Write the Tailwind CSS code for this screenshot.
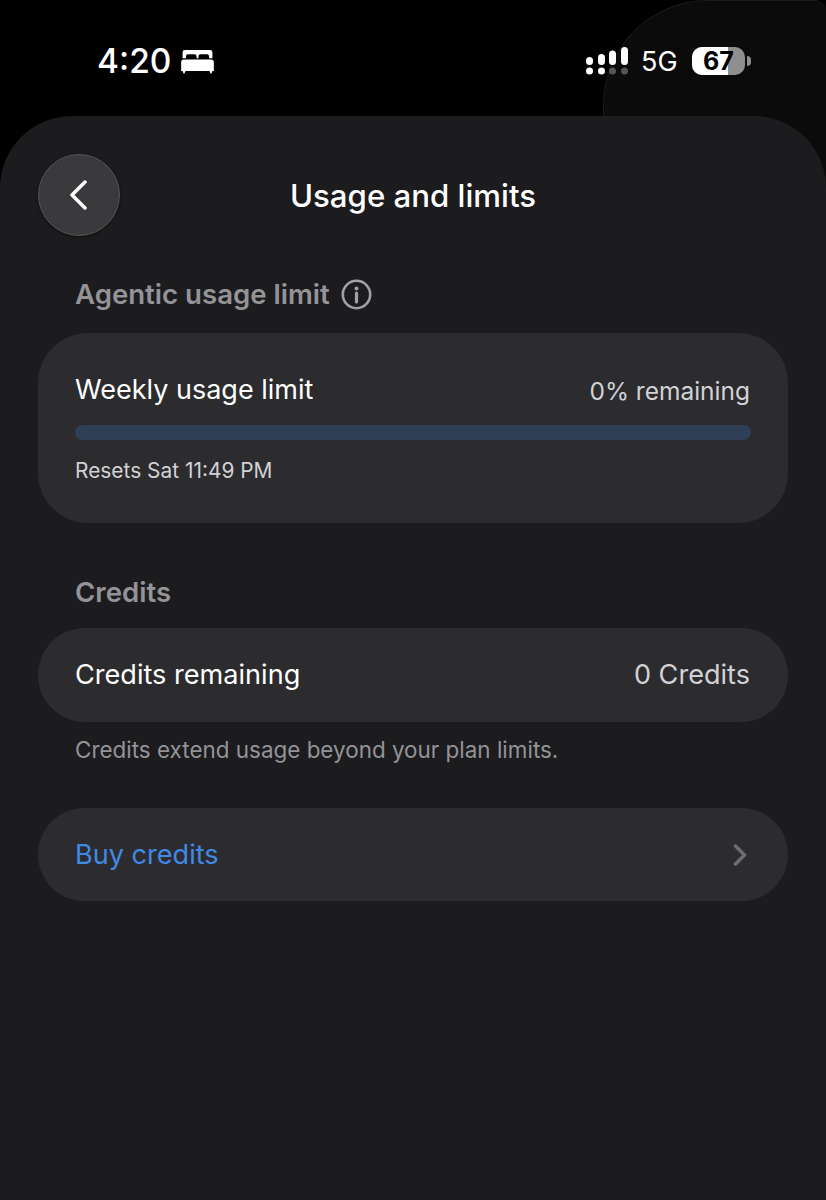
<!DOCTYPE html>
<html lang="en">
<head>
    <meta charset="UTF-8">
    <meta name="viewport" content="width=device-width, initial-scale=1.0">
    <title>Usage and limits</title>
    <script src="https://cdn.jsdelivr.net/npm/@tailwindcss/browser@4"></script>
</head>
<body class="bg-black">
    <div class="relative w-[826px] h-[1200px] overflow-hidden bg-black font-['Inter','Liberation_Sans',sans-serif]">
        <!-- window behind the sheet, top right -->
        <div class="absolute left-[603px] top-0 w-[223px] h-[200px] bg-[#0b0b0c] border-l border-t border-[#1a1a1c] rounded-tl-[105px] rounded-tr-[12px]"></div>

        <!-- status bar -->
        <div class="relative h-[116px] flex items-start justify-between pl-[97px] pr-[75px] pt-[42px]">
            <div class="flex items-center gap-[9px] h-[38px]">
                <span class="text-white text-[33.500px] leading-[38px] font-medium">4:20</span>
                <svg width="35" height="25" viewBox="0 0 36 26" fill="#fff" class="mt-[1px]">
                    <path d="M5 1h26a2.500 2.500 0 0 1 2.500 2.500V9.500H30V7.500a2 2 0 0 0-2-2h-7a2 2 0 0 0-2 2v2h-2v-2a2 2 0 0 0-2-2H8a2 2 0 0 0-2 2v2H2.500v-6A2.500 2.500 0 0 1 5 1z"/>
                    <path d="M4 11h28a3 3 0 0 1 3 3v9h-1.500l-1 2.500h-1L30.500 23h-25l-1 2.500h-1L2.500 23H1v-9a3 3 0 0 1 3-3z"/>
                </svg>
            </div>
            <div class="flex items-center h-[38px]">
                <svg width="42" height="28" viewBox="0 0 42 28" fill="#fff" class="mr-[14px]">
                    <rect x="0" y="10" width="7" height="8" rx="3.500"/>
                    <rect x="12" y="7" width="7" height="11" rx="3.500"/>
                    <rect x="23" y="3.500" width="7" height="14.500" rx="3.500"/>
                    <rect x="35" y="0" width="7" height="18" rx="3.500"/>
                    <circle cx="3.500" cy="24" r="3.500"/>
                    <circle cx="15.500" cy="24" r="3.500"/>
                    <circle cx="26.500" cy="24" r="3.500" fill="#555"/>
                    <circle cx="38.500" cy="24" r="3.500" fill="#555"/>
                </svg>
                <span class="text-white text-[27px] leading-[38px] w-[50px] ml-[-1px] mr-[1px] mt-[1px]">5G</span>
                <div class="relative w-[53px] h-[28px] rounded-[10px] bg-[#8f8f8f] overflow-hidden">
                    <div class="absolute left-0 top-0 bottom-0 w-[36px] bg-white"></div>
                    <span class="absolute inset-0 text-center text-black text-[25px] leading-[28px] font-bold">67</span>
                </div>
                <div class="w-[4px] h-[10px] rounded-r-full bg-[#8f8f8f] ml-[2px]"></div>
            </div>
        </div>

        <!-- sheet -->
        <div class="relative h-[1084px] bg-[#1c1c1e] rounded-t-[72px] px-[38px] pt-[38px]">
            <div class="relative flex items-center justify-center h-[82px]">
                <button class="absolute left-0 top-0 w-[82px] h-[82px] rounded-full bg-[#3a3a3c] border border-[#555557] shadow-[0_1px_3px_rgba(0,0,0,0.5)] flex items-center justify-center">
                    <svg width="20" height="30" viewBox="0 0 20 30" fill="none" stroke="#fff" stroke-width="3.500" stroke-linecap="round" stroke-linejoin="round"><path d="M16 2 3 15l13 13"/></svg>
                </button>
                <h1 class="text-white text-[31.200px] leading-[38px] font-medium mt-[1px]">Usage and limits</h1>
            </div>

            <div class="flex items-center gap-[11px] mt-[40px] pl-[37px] h-[36px]">
                <h2 class="text-[#939398] text-[27.600px] leading-[36px] font-semibold">Agentic usage limit</h2>
                <svg width="31" height="31" viewBox="0 0 31 31" fill="none">
                    <circle cx="15.500" cy="15.500" r="13.700" stroke="#a1a1a5" stroke-width="2.600"/>
                    <circle cx="15.500" cy="9.500" r="2" fill="#a1a1a5"/>
                    <path d="M15.500 14v9" stroke="#a1a1a5" stroke-width="3.200" stroke-linecap="round"/>
                </svg>
            </div>

            <div class="mt-[21px] h-[190px] rounded-[50px] bg-[#2c2c2e] pl-[37px] pr-[37px] pt-[39px]">
                <div class="flex items-center justify-between h-[36px]">
                    <span class="text-white text-[27px] leading-[36px]">Weekly usage limit</span>
                    <span class="text-[#d1d1d6] text-[24.500px] leading-[36px] mt-[1px] pr-[1px]">0% remaining</span>
                </div>
                <div class="mt-[17px] h-[15px] rounded-full bg-[#2f3f55]"></div>
                <div class="mt-[17px] text-[#d1d1d6] text-[20.900px] leading-[28px]">Resets Sat 11:49 PM</div>
            </div>

            <h2 class="mt-[51px] pl-[37px] text-[#939398] text-[27.600px] leading-[36px] font-semibold">Credits</h2>

            <div class="mt-[18px] h-[94px] rounded-full bg-[#2c2c2e] pl-[37px] pr-[38px] flex items-center justify-between">
                <span class="text-white text-[27.100px] mt-[1px]">Credits remaining</span>
                <span class="text-[#d1d1d6] text-[27.100px] mt-[1px]">0 Credits</span>
            </div>

            <p class="mt-[14px] pl-[37px] text-[#939398] text-[22.450px] leading-[28px]">Credits extend usage beyond your plan limits.</p>

            <div class="mt-[44px] h-[93px] rounded-full bg-[#2c2c2e] pl-[37px] pr-[41px] flex items-center justify-between">
                <span class="text-[#4089e8] text-[27.100px] mt-[2px]">Buy credits</span>
                <svg width="14" height="22" viewBox="0 0 14 22" fill="none" stroke="#6e6e72" stroke-width="3.500" stroke-linecap="round" stroke-linejoin="round"><path d="m2.500 2 9 9-9 9"/></svg>
            </div>
        </div>
    </div>
</body>
</html>
